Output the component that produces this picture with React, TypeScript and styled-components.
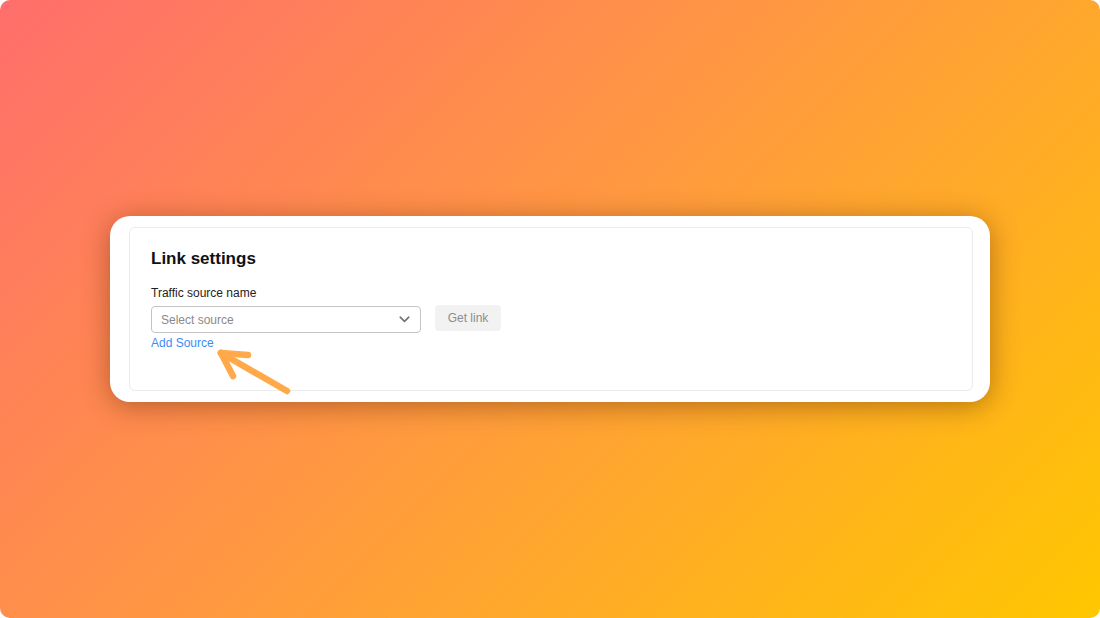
import React from "react";
import styled, { createGlobalStyle } from "styled-components";

const Global = createGlobalStyle`
  html, body { margin: 0; padding: 0; background: #ffffff; }
  body { font-family: "Liberation Sans", Arial, sans-serif; }
  * { box-sizing: border-box; }
`;

const Page = styled.div`
  width: 1100px;
  height: 618px;
  border-radius: 10px;
  background: linear-gradient(135deg, #ff6e6c 0%, #ff9b3e 50%, #ffc700 100%);
  display: flex;
  align-items: center;
  justify-content: center;
  overflow: hidden;
`;

const Card = styled.div`
  width: 880px;
  height: 186px;
  background: #ffffff;
  border-radius: 20px;
  padding: 11px 17px 11px 19px;
  box-shadow: 0 4px 28px rgba(90, 40, 0, 0.45);
`;

const Panel = styled.div`
  position: relative;
  height: 100%;
  border: 1px solid #ebebeb;
  border-radius: 6px;
  padding: 21px 21px;
  display: flex;
  flex-direction: column;
`;

const Title = styled.h2`
  margin: 0;
  font-size: 17px;
  line-height: 20px;
  font-weight: 700;
  color: #111111;
`;

const Label = styled.div`
  margin-top: 17px;
  font-size: 12px;
  line-height: 14px;
  color: #222222;
`;

const Row = styled.div`
  margin-top: 6px;
  display: flex;
  align-items: flex-start;
  gap: 14px;
`;

const Select = styled.div`
  width: 270px;
  height: 27px;
  border: 1px solid #c4c4c4;
  border-radius: 4px;
  padding: 0 10px 0 9px;
  display: flex;
  align-items: center;
  justify-content: space-between;
  font-size: 12px;
  color: #8a8a8a;
`;

const Button = styled.div`
  width: 66px;
  height: 26px;
  margin-top: -1px;
  border-radius: 4px;
  background: #f2f2f2;
  color: #8c8c8c;
  font-size: 12px;
  display: flex;
  align-items: center;
  justify-content: center;
`;

const Link = styled.a`
  margin-top: 3px;
  font-size: 12px;
  line-height: 14px;
  color: #3b8bf5;
  text-decoration: none;
  align-self: flex-start;
`;

const Arrow = styled.svg`
  position: absolute;
  left: 81px;
  top: 115px;
  overflow: visible;
`;

export default function App() {
  return (
    <>
      <Global />
      <Page>
        <Card>
          <Panel>
            <Title>Link settings</Title>
            <Label>Traffic source name</Label>
            <Row>
              <Select>
                <span>Select source</span>
                <svg width="11" height="7" viewBox="0 0 11 7">
                  <polyline points="1.2,1.2 5.5,5.3 9.8,1.2" fill="none" stroke="#707070" strokeWidth="1.6" strokeLinecap="round" strokeLinejoin="round" />
                </svg>
              </Select>
              <Button>Get link</Button>
            </Row>
            <Link href="#">Add Source</Link>
            <Arrow width="85" height="58" viewBox="0 0 85 58">
              <g fill="none" stroke="#ffa94a" strokeWidth="6.5" strokeLinecap="round" strokeLinejoin="round">
                <line x1="10" y1="10" x2="76" y2="48" />
                <line x1="10" y1="10" x2="37" y2="12" />
                <line x1="10" y1="10" x2="22" y2="33" />
              </g>
            </Arrow>
          </Panel>
        </Card>
      </Page>
    </>
  );
}
